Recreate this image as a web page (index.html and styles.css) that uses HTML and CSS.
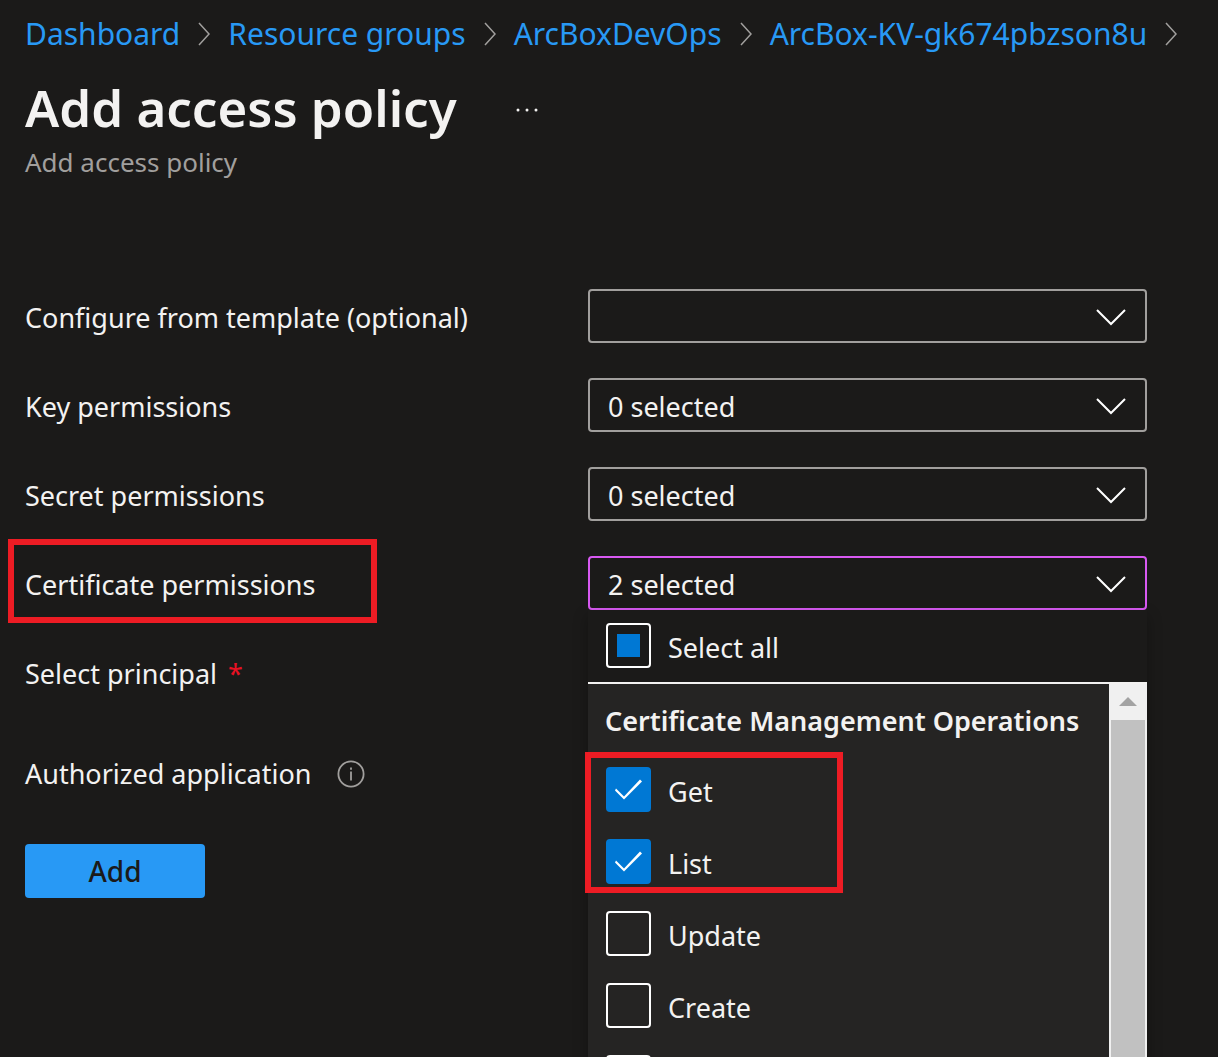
FILE: index.html
```html
<!DOCTYPE html>
<html lang="en">
<head>
<meta charset="utf-8">
<meta name="viewport" content="width=device-width, initial-scale=1">
<title>Add access policy</title>
<link rel="stylesheet" href="styles.css">
</head>
<body>
<div class="page">
  <nav class="breadcrumb" aria-label="Breadcrumb">
    <a href="#">Dashboard</a>
    <svg class="sep" viewBox="0 0 12 24" aria-hidden="true"><path d="M1 1l10 11L1 23"/></svg>
    <a href="#">Resource groups</a>
    <svg class="sep" viewBox="0 0 12 24" aria-hidden="true"><path d="M1 1l10 11L1 23"/></svg>
    <a href="#">ArcBoxDevOps</a>
    <svg class="sep" viewBox="0 0 12 24" aria-hidden="true"><path d="M1 1l10 11L1 23"/></svg>
    <a href="#">ArcBox-KV-gk674pbzson8u</a>
    <svg class="sep" viewBox="0 0 12 24" aria-hidden="true"><path d="M1 1l10 11L1 23"/></svg>
  </nav>

  <header class="header">
    <div class="title-row">
      <h1 class="title">Add access policy</h1>
      <button class="more" type="button" aria-label="More actions">
        <svg width="26" height="4" viewBox="0 0 26 4"><circle cx="2" cy="2" r="1.5"/><circle cx="11" cy="2" r="1.5"/><circle cx="20" cy="2" r="1.5"/></svg>
      </button>
    </div>
    <p class="subtitle">Add access policy</p>
  </header>

  <form class="form">
    <div class="row">
      <label class="label" for="template">Configure from template (optional)</label>
      <div class="field">
        <select class="select" id="template"><option></option></select>
        <svg class="chevron" viewBox="0 0 30 17" aria-hidden="true"><path d="M1 1l14 14L29 1"/></svg>
      </div>
    </div>
    <div class="row">
      <label class="label" for="keys">Key permissions</label>
      <div class="field">
        <select class="select" id="keys"><option>0 selected</option></select>
        <svg class="chevron" viewBox="0 0 30 17" aria-hidden="true"><path d="M1 1l14 14L29 1"/></svg>
      </div>
    </div>
    <div class="row">
      <label class="label" for="secrets">Secret permissions</label>
      <div class="field">
        <select class="select" id="secrets"><option>0 selected</option></select>
        <svg class="chevron" viewBox="0 0 30 17" aria-hidden="true"><path d="M1 1l14 14L29 1"/></svg>
      </div>
    </div>
    <div class="row">
      <label class="label" for="certificates">Certificate permissions</label>
      <span class="mark mark-label"></span>
      <div class="field">
        <select class="select select-open" id="certificates"><option>2 selected</option></select>
        <svg class="chevron" viewBox="0 0 30 17" aria-hidden="true"><path d="M1 1l14 14L29 1"/></svg>
        <div class="menu">
          <label class="option"><input class="check check-mixed" type="checkbox"><span class="option-text">Select all</span></label>
          <div class="menu-body">
            <fieldset class="list">
              <legend class="group">Certificate Management Operations</legend>
              <label class="option"><input class="check" type="checkbox" checked><span class="option-text">Get</span></label>
              <label class="option"><input class="check" type="checkbox" checked><span class="option-text">List</span></label>
              <label class="option"><input class="check" type="checkbox"><span class="option-text">Update</span></label>
              <label class="option"><input class="check" type="checkbox"><span class="option-text">Create</span></label>
              <div class="option"><input class="check" type="checkbox" aria-label="Next permission"></div>
            </fieldset>
            <div class="scrollbar" aria-hidden="true">
              <svg class="scroll-up" viewBox="0 0 18 9"><path d="M0 9l9-9 9 9z"/></svg>
              <div class="thumb"></div>
            </div>
            <span class="mark mark-options"></span>
          </div>
        </div>
      </div>
    </div>
    <div class="row">
      <span class="label">Select principal <span class="required">*</span></span>
    </div>
    <div class="row row-app">
      <span class="label">Authorized application
        <svg class="info" viewBox="0 0 28 28" aria-hidden="true"><circle cx="14" cy="14" r="12.6"/><path d="M14 11.500v9M14 7.500v2.200"/></svg>
      </span>
    </div>
    <button class="add" type="button">Add</button>
  </form>
</div>
</body>
</html>
```
FILE: styles.css
```css
* {
  box-sizing: border-box;
}

body {
  margin: 0;
  background: #1b1a19;
  color: #f3f2f1;
  font-family: "Noto Sans", "Open Sans", sans-serif;
  font-size: 27px;
  line-height: 36px;
}

.page {
  min-height: 100vh;
  padding: 14px 71px 24px 25px;
  overflow: hidden;
}

.breadcrumb {
  display: flex;
  align-items: center;
  height: 40px;
  gap: 18px;
  font-size: 30px;
  white-space: nowrap;
}

.breadcrumb a {
  color: #2899f5;
  text-decoration: none;
}

.sep {
  flex: none;
  width: 12px;
  height: 24px;
  fill: none;
  stroke: #a19f9d;
  stroke-width: 1.5;
}

.header {
  margin-bottom: 109px;
}

.title-row {
  display: flex;
  align-items: center;
  gap: 59px;
  height: 90px;
  padding-top: 16px;
}

.title {
  margin: 0;
  font-size: 51px;
  font-weight: 600;
  line-height: 72px;
}

.more {
  display: flex;
  padding: 6px 0 0;
  border: 0;
  background: none;
  fill: #f3f2f1;
}

.subtitle {
  margin: 0;
  color: #a19f9d;
  font-size: 26px;
}

.form {
  display: flex;
  flex-direction: column;
  gap: 35px;
}

.row {
  position: relative;
  display: flex;
  min-height: 54px;
}

.row-app {
  margin-top: 11px;
}

.label {
  display: flex;
  align-items: center;
  flex: none;
  width: 563px;
  gap: 11px;
  padding-top: 3px;
}

.required {
  color: #e81123;
}

.info {
  width: 28px;
  height: 28px;
  margin-left: 14px;
  fill: none;
  stroke: #a19f9d;
  stroke-width: 1.8;
}

.field {
  position: relative;
  flex: 1;
}

.select {
  display: block;
  width: 100%;
  height: 54px;
  padding: 3px 60px 0 18px;
  appearance: none;
  border: 2px solid #a19f9d;
  border-radius: 4px;
  background: #1b1a19;
  color: inherit;
  font: inherit;
}

.select-open {
  border-color: #d859f2;
}

.chevron {
  position: absolute;
  top: 20px;
  right: 21px;
  width: 30px;
  height: 17px;
  fill: none;
  stroke: #fff;
  stroke-width: 2;
  pointer-events: none;
}

.menu {
  position: absolute;
  top: 100%;
  left: 0;
  z-index: 1;
  width: 100%;
  background: #1b1a19;
  box-shadow: 0 6px 14px rgba(0, 0, 0, 0.3);
}

.option {
  display: flex;
  align-items: center;
  gap: 17px;
  height: 72px;
  padding: 0 0 2px 18px;
}

.option-text {
  padding-top: 5px;
}

.check {
  position: relative;
  width: 45px;
  height: 45px;
  margin: 0;
  appearance: none;
  border: 2px solid #fff;
  border-radius: 4px;
}

.check:checked {
  border-color: #0078d4;
  background: #0078d4;
}

.check:checked::after {
  content: "";
  position: absolute;
  inset: 0;
  background: #fff;
  clip-path: polygon(7px 22px, 8px 20px, 16px 28px, 32px 11px, 34px 13px, 16px 31px);
}

.check-mixed::after {
  content: "";
  position: absolute;
  inset: 9px;
  background: #0078d4;
}

.menu-body {
  position: relative;
  display: flex;
  border-top: 2px solid #f3f2f1;
  background: #252423;
}

.list {
  flex: 1;
  min-width: 0;
  margin: 0;
  padding: 0;
  border: 0;
}

.group {
  padding: 19px 0 15px 17px;
  font-weight: 600;
  white-space: nowrap;
}

.scrollbar {
  display: flex;
  flex-direction: column;
  align-items: center;
  width: 38px;
  padding: 13px 2px 0;
  background: #f0f0f0;
}

.scroll-up {
  width: 18px;
  height: 9px;
  margin-bottom: 14px;
  fill: #a3a3a3;
}

.thumb {
  flex: 1;
  width: 100%;
  background: #c1c1c1;
}

.mark {
  position: absolute;
  border: 6px solid #ed1c24;
  pointer-events: none;
}

.mark-label {
  top: -17px;
  left: -17px;
  width: 369px;
  height: 84px;
}

.mark-options {
  top: 68px;
  left: -3px;
  width: 258px;
  height: 141px;
}

.add {
  align-self: flex-start;
  width: 180px;
  height: 54px;
  margin-top: 10px;
  padding: 0;
  border: 0;
  border-radius: 4px;
  background: #2899f5;
  color: #1b1a19;
  font: inherit;
  font-size: 28px;
  font-weight: 500;
}
```
